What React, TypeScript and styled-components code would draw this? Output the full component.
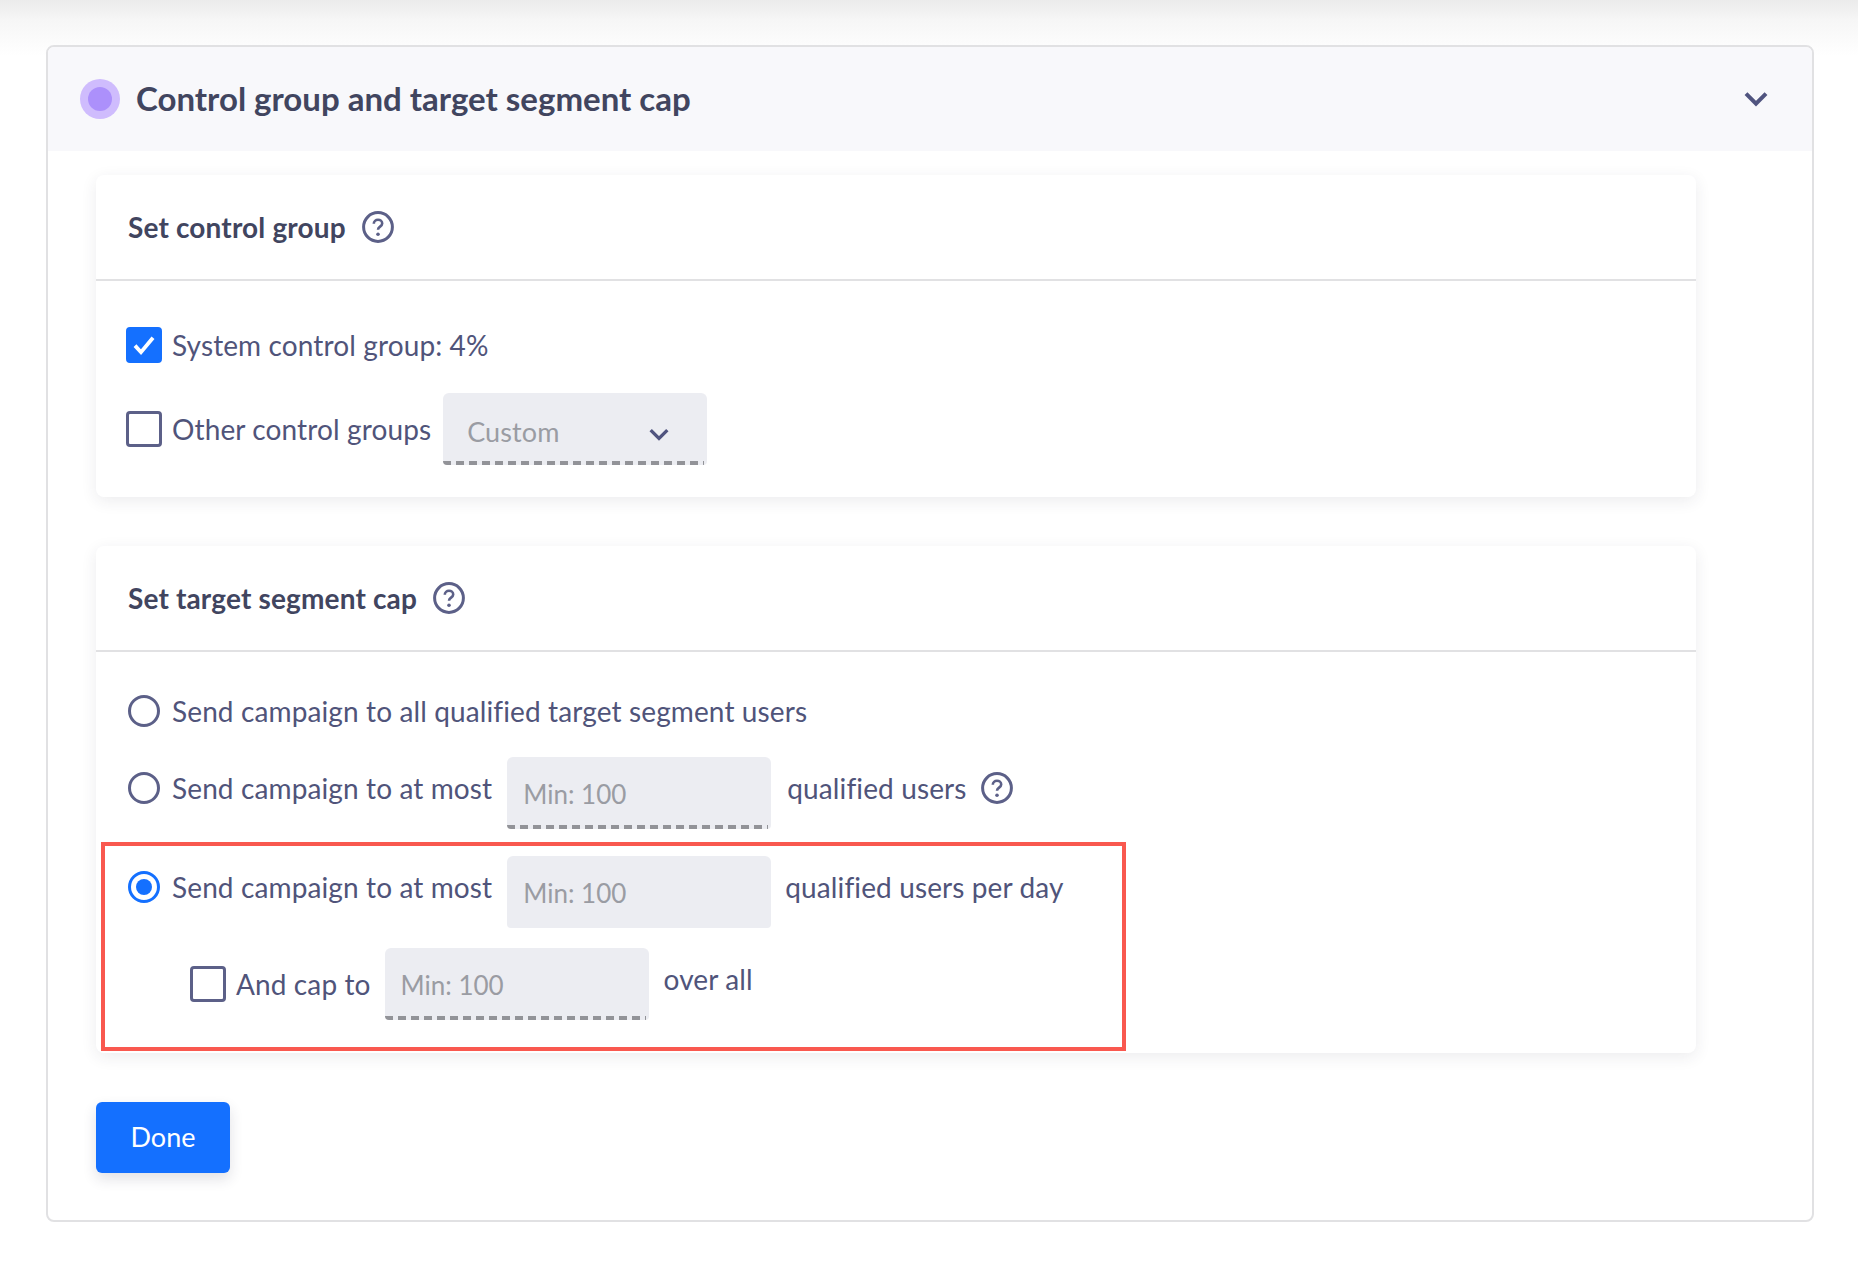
import React from "react";
import styled, { createGlobalStyle } from "styled-components";

const GlobalStyle = createGlobalStyle`
  html, body {
    margin: 0;
    background: #ffffff;
  }

  body {
    font-family: "Lato", "Liberation Sans", sans-serif;
    color: #50547a;
  }
`;

const Page = styled.div`
  box-sizing: border-box;
  height: 1264px;
  padding: 45px 44px 0 46px;
  background: linear-gradient(#ebebeb 0, #f6f6f6 20px, #fbfbfb 40px, #ffffff 56px);
`;

const Panel = styled.section`
  box-sizing: border-box;
  height: 1177px;
  background: #ffffff;
  border: 2px solid #e1e1e3;
  border-radius: 8px;
  overflow: hidden;
`;

const PanelHeader = styled.header`
  display: flex;
  align-items: center;
  height: 104px;
  padding: 0 44px 0 32px;
  background: #f8f8fb;
`;

const Dot = styled.span`
  display: flex;
  align-items: center;
  justify-content: center;
  width: 40px;
  height: 40px;
  margin-right: 16px;
  border-radius: 50%;
  background: #cfbcfd;

  &::after {
    content: "";
    width: 24px;
    height: 24px;
    border-radius: 50%;
    background: #ac90fb;
  }
`;

const PanelTitle = styled.h2`
  flex: 1;
  margin: 0 0 3px;
  font-size: 33px;
  font-weight: 700;
  color: #41455f;
`;

const PanelBody = styled.div`
  display: flex;
  flex-direction: column;
  align-items: flex-start;
  gap: 49px;
  padding: 24px 0 0 48px;
`;

const Card = styled.div`
  box-sizing: border-box;
  width: 1600px;
  background: #ffffff;
  border-radius: 8px;
  box-shadow: 0 4px 16px rgba(40, 44, 70, 0.09);
`;

const CardHead = styled.div`
  display: flex;
  align-items: center;
  gap: 16px;
  box-sizing: border-box;
  height: 106px;
  padding: 0 32px 1px;
  border-bottom: 2px solid #e1e1e3;
`;

const CardTitle = styled.h3`
  margin: 0;
  font-size: 28px;
  font-weight: 700;
  letter-spacing: 0.15px;
  color: #41455f;
`;

const CardRows = styled.div<{ $top: number; $bottom: number }>`
  display: flex;
  flex-direction: column;
  padding: ${(p) => p.$top}px 0 ${(p) => p.$bottom}px 32px;
`;

const Row = styled.div<{ $gap?: number; $indent?: number }>`
  display: flex;
  align-items: flex-start;
  margin-top: ${(p) => p.$gap ?? 0}px;
  margin-left: ${(p) => p.$indent ?? 0}px;
`;

const Choice = styled.label<{ $height: number; $space?: number }>`
  display: flex;
  align-items: center;
  height: ${(p) => p.$height}px;
  margin-right: ${(p) => p.$space ?? 15}px;
  font-size: 28px;
  letter-spacing: 0.12px;
  white-space: nowrap;
`;

const Checkbox = styled.span<{ $checked?: boolean }>`
  display: flex;
  align-items: center;
  justify-content: center;
  box-sizing: border-box;
  flex: none;
  width: 36px;
  height: 36px;
  margin: 0 10px 0 -2px;
  border-radius: 4px;
  border: 3px solid ${(p) => (p.$checked ? "#1470ff" : "#5c6088")};
  background: ${(p) => (p.$checked ? "#1470ff" : "#ffffff")};
`;

const Radio = styled.span<{ $checked?: boolean }>`
  display: flex;
  align-items: center;
  justify-content: center;
  box-sizing: border-box;
  flex: none;
  width: 32px;
  height: 32px;
  margin-right: 12px;
  border-radius: 50%;
  border: 3px solid ${(p) => (p.$checked ? "#1470ff" : "#5c6088")};

  &::after {
    content: "";
    display: ${(p) => (p.$checked ? "block" : "none")};
    width: 16px;
    height: 16px;
    border-radius: 50%;
    background: #1470ff;
  }
`;

const Field = styled.div<{ $dashed?: boolean }>`
  display: flex;
  align-items: center;
  justify-content: space-between;
  box-sizing: border-box;
  flex: none;
  width: 264px;
  height: 72px;
  padding: 1px 38px 0 16px;
  border-radius: 6px 6px 4px 4px;
  background-color: #ecedf2;
  font-size: 26px;
  color: #9a9ca3;
  ${(p) =>
    p.$dashed &&
    `
    background-image: repeating-linear-gradient(90deg, #929398 0 8px, transparent 8px 13px);
    background-size: calc(100% - 3px) 4px;
    background-position: left bottom;
    background-repeat: no-repeat;
  `}
`;

const SelectField = styled(Field)`
  padding-left: 24px;
  padding-top: 4px;
  font-size: 27px;
  letter-spacing: 0.1px;

  svg {
    margin-top: 7px;
  }
`;

const Trailing = styled.span<{ $height: number; $space: number }>`
  display: flex;
  align-items: center;
  gap: 14px;
  height: ${(p) => p.$height}px;
  margin-left: ${(p) => p.$space}px;
  font-size: 28px;
  letter-spacing: 0.12px;
  white-space: nowrap;
`;

const Highlight = styled.div`
  box-sizing: border-box;
  width: 1025px;
  height: 209px;
  margin: 13px 0 0 -27px;
  padding: 10px 0 0 23px;
  border: 4px solid #f9584f;
`;

const DoneButton = styled.button`
  width: 134px;
  height: 71px;
  padding: 0 0 2px;
  border: 0;
  border-radius: 6px;
  background: #1470ff;
  box-shadow: 0 6px 14px rgba(40, 44, 70, 0.14);
  color: #ffffff;
  font-family: inherit;
  font-size: 27px;
`;

const HelpIcon = () => (
  <svg width="32" height="32" viewBox="0 0 32 32" fill="none">
    <circle cx="16" cy="16" r="14.4" stroke="#5c6088" strokeWidth="3" />
    <path
      d="M11.8 12.8c0-2.4 1.9-4 4.2-4s4.2 1.5 4.2 3.7c0 3.1-4.2 3.2-4.2 6.2"
      stroke="#5c6088"
      strokeWidth="2.6"
    />
    <circle cx="16" cy="23.2" r="1.8" fill="#5c6088" />
  </svg>
);

const Chevron = ({ width }: { width: number }) => (
  <svg width={width} height={width * 0.63} viewBox="0 0 24 15" fill="none">
    <path d="M2 2.5l10 10 10-10" stroke="#50547f" strokeWidth="4" />
  </svg>
);

const Tick = () => (
  <svg width="24" height="22" viewBox="0 0 20 18" fill="none">
    <path d="M2.5 9.5l5 5.5L17.5 3" stroke="#ffffff" strokeWidth="3.2" />
  </svg>
);

export default function App() {
  return (
    <>
      <GlobalStyle />
      <Page>
        <Panel>
          <PanelHeader>
            <Dot />
            <PanelTitle>Control group and target segment cap</PanelTitle>
            <Chevron width={24} />
          </PanelHeader>
          <PanelBody>
            <Card>
              <CardHead>
                <CardTitle>Set control group</CardTitle>
                <HelpIcon />
              </CardHead>
              <CardRows $top={46} $bottom={32}>
                <Row>
                  <Choice $height={36}>
                    <Checkbox $checked>
                      <Tick />
                    </Checkbox>
                    System control group: 4%
                  </Choice>
                </Row>
                <Row $gap={30}>
                  <Choice $height={72} $space={12}>
                    <Checkbox />
                    Other control groups
                  </Choice>
                  <SelectField $dashed>
                    Custom
                    <Chevron width={20} />
                  </SelectField>
                </Row>
              </CardRows>
            </Card>
            <Card>
              <CardHead>
                <CardTitle>Set target segment cap</CardTitle>
                <HelpIcon />
              </CardHead>
              <CardRows $top={43} $bottom={2}>
                <Row>
                  <Choice $height={32}>
                    <Radio />
                    Send campaign to all qualified target segment users
                  </Choice>
                </Row>
                <Row $gap={30}>
                  <Choice $height={61}>
                    <Radio />
                    Send campaign to at most
                  </Choice>
                  <Field $dashed>Min: 100</Field>
                  <Trailing $height={61} $space={16}>
                    qualified users
                    <HelpIcon />
                  </Trailing>
                </Row>
                <Highlight>
                  <Row>
                    <Choice $height={62}>
                      <Radio $checked />
                      Send campaign to at most
                    </Choice>
                    <Field>Min: 100</Field>
                    <Trailing $height={62} $space={14}>
                      qualified users per day
                    </Trailing>
                  </Row>
                  <Row $gap={20} $indent={64}>
                    <Choice $height={72} $space={14}>
                      <Checkbox />
                      And cap to
                    </Choice>
                    <Field $dashed>Min: 100</Field>
                    <Trailing $height={62} $space={15}>
                      over all
                    </Trailing>
                  </Row>
                </Highlight>
              </CardRows>
            </Card>
            <DoneButton>Done</DoneButton>
          </PanelBody>
        </Panel>
      </Page>
    </>
  );
}
